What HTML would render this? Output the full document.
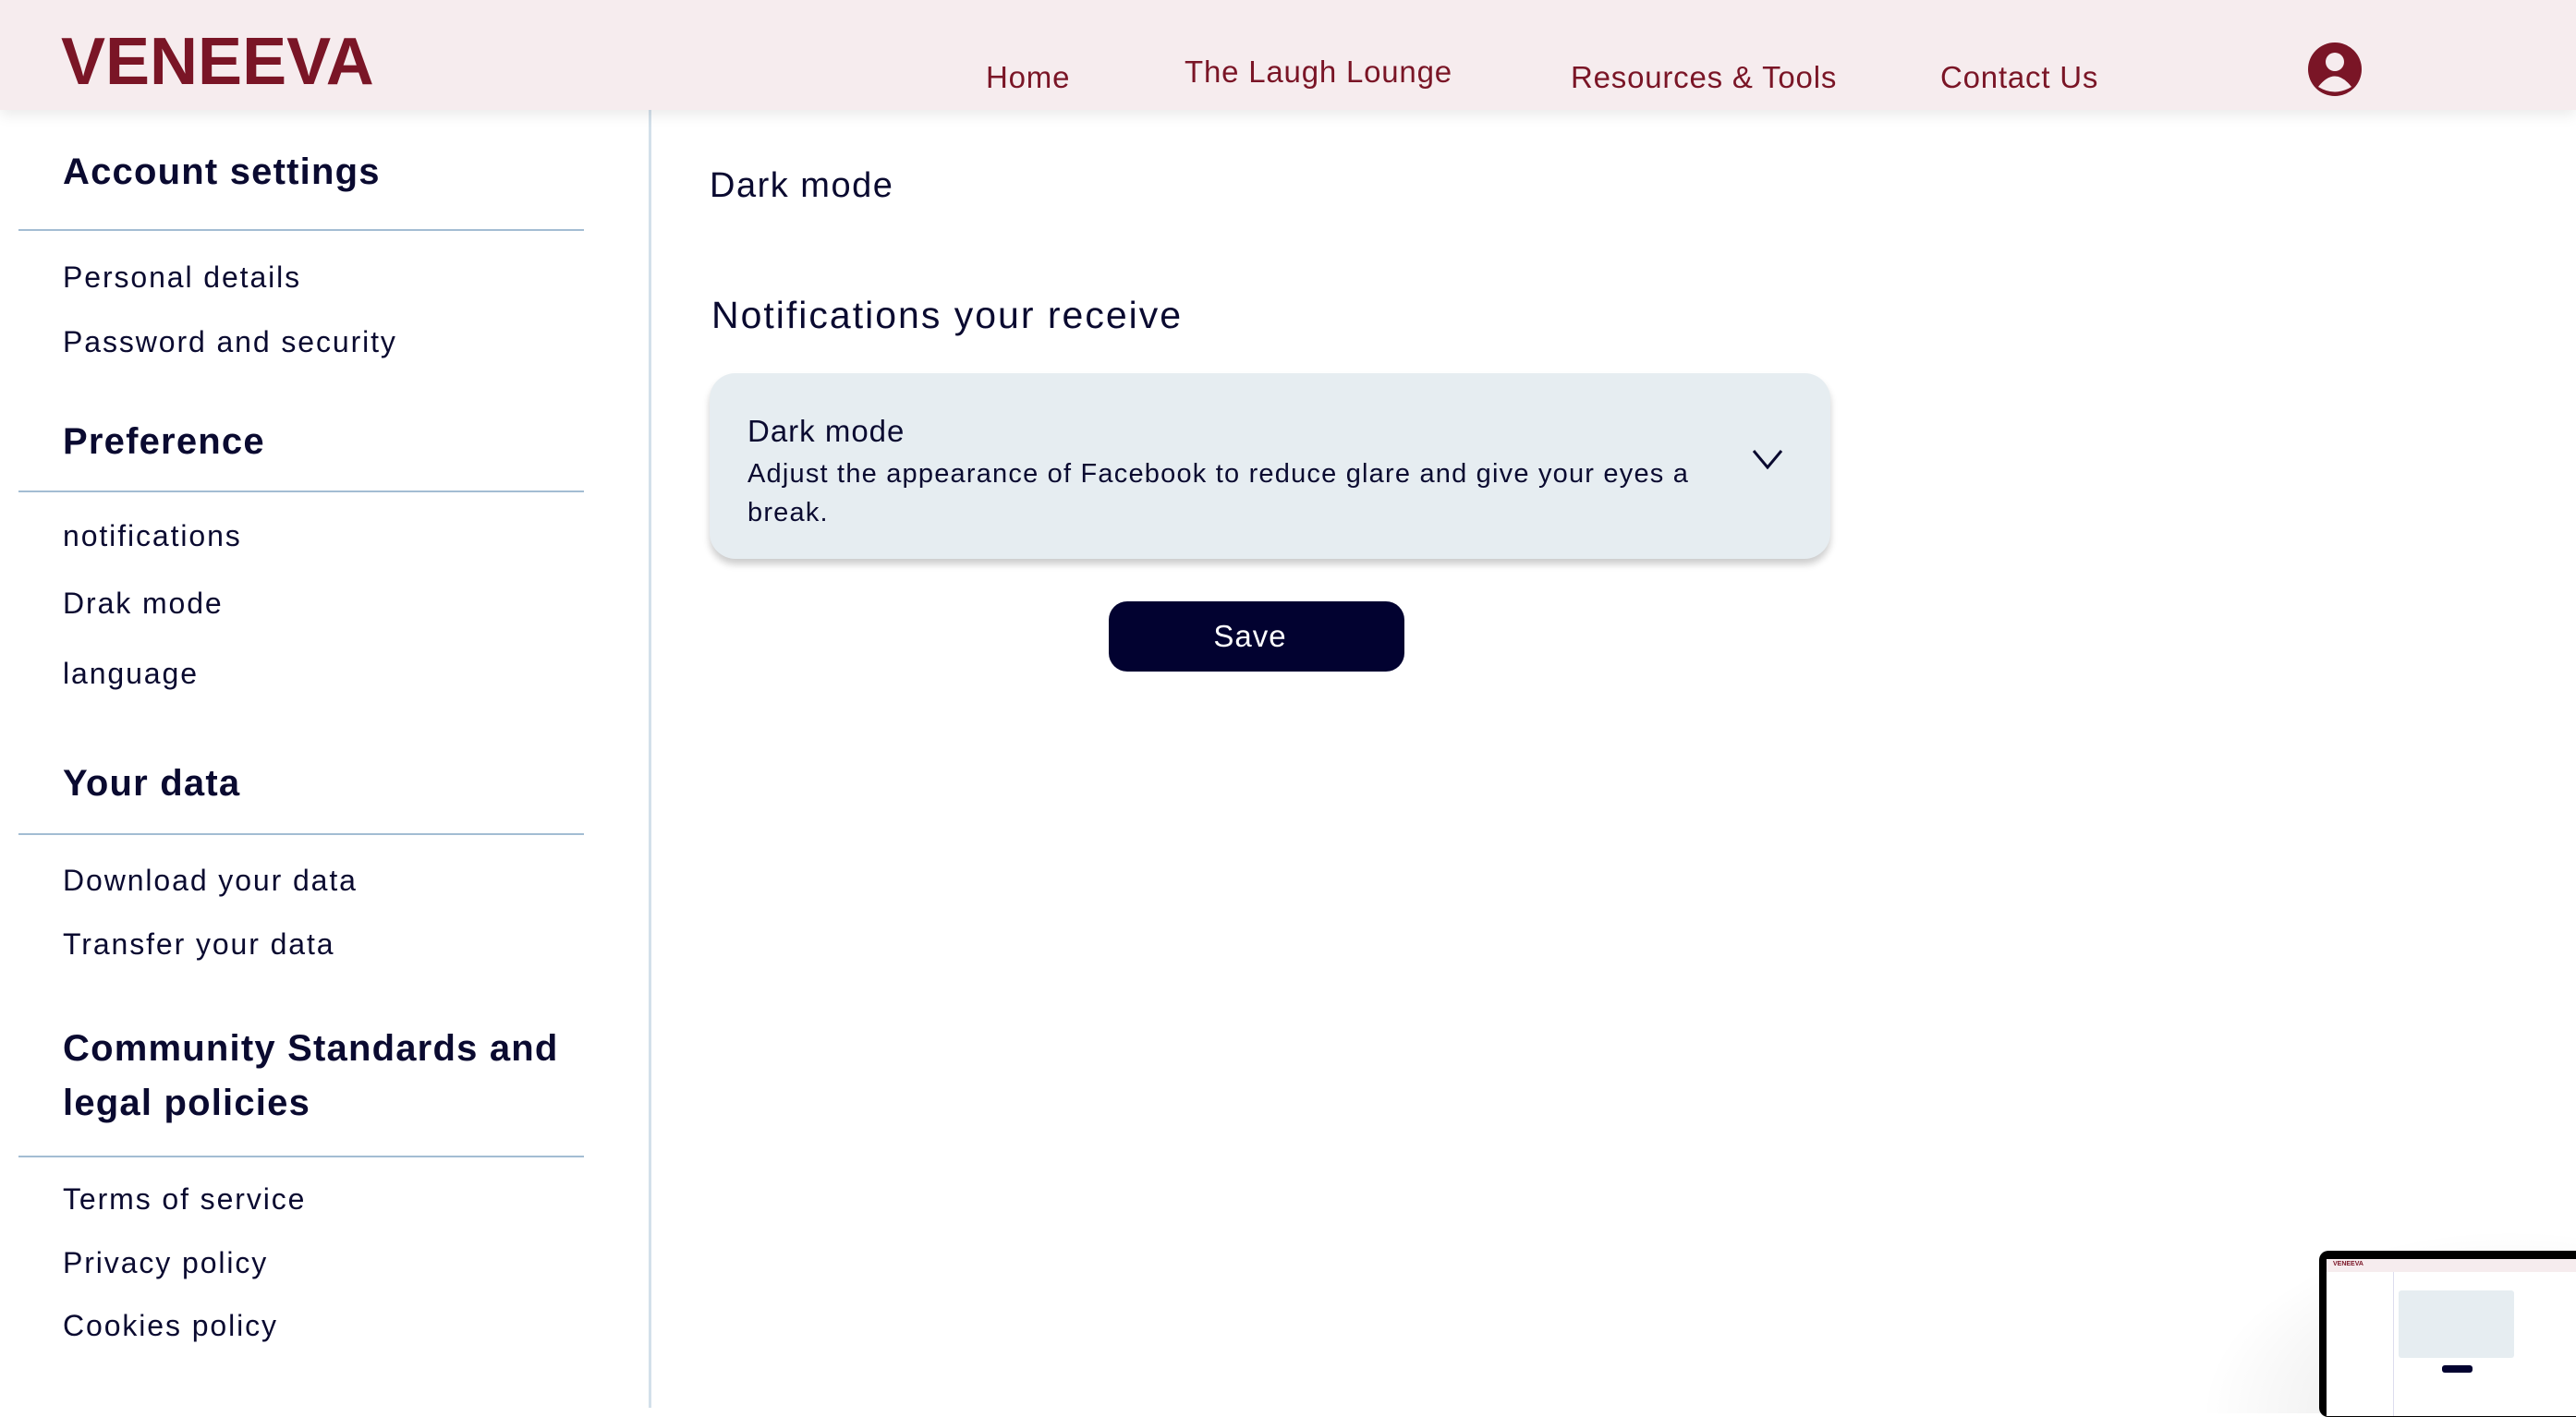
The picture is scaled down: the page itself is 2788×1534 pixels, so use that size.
<!DOCTYPE html>
<html><head><meta charset="utf-8"><style>
*{margin:0;padding:0;box-sizing:border-box}
body{width:2788px;height:1524px;background:#fff;font-family:"Liberation Sans",sans-serif;color:#0a0a30;position:relative;overflow:hidden}
.hdr{position:absolute;left:0;top:0;width:2788px;height:119px;background:#f6ecee;box-shadow:0 6px 14px rgba(0,0,0,.08);z-index:2}
.logo{position:absolute;left:66px;top:26px;font-size:72px;font-weight:bold;color:#7a1526;letter-spacing:0px}
.nav{position:absolute;font-size:33px;color:#7a1526;letter-spacing:0.8px}
.side{position:absolute;left:702px;top:119px;width:3px;height:1405px;background:#d3e0ea}
.a{position:absolute;white-space:nowrap}
.h{font-size:40px;font-weight:bold;left:68px;letter-spacing:1.2px}
.i{font-size:32px;left:68px;letter-spacing:1.9px}
.ln{position:absolute;left:20px;width:612px;height:2px;background:#a3bdd3}
</style></head><body>
<div class="hdr">
<div class="logo">VENEEVA</div>
<div class="nav" style="left:1067px;top:65px">Home</div>
<div class="nav" style="left:1282px;top:59px">The Laugh Lounge</div>
<div class="nav" style="left:1700px;top:65px">Resources &amp; Tools</div>
<div class="nav" style="left:2100px;top:65px">Contact Us</div>
<svg style="position:absolute;left:2497px;top:45px" width="60" height="60" viewBox="0 0 60 60"><circle cx="30" cy="30" r="29" fill="#7a1526"/><circle cx="30" cy="22" r="10" fill="#f6ecee"/><path d="M12 49 Q30 26 48 49 Q30 60 12 49Z" fill="#f6ecee"/></svg>
</div>
<div class="side"></div>

<div class="a h" style="top:164px">Account settings</div>
<div class="ln" style="top:248px"></div>
<div class="a i" style="top:282px">Personal details</div>
<div class="a i" style="top:352px">Password and security</div>
<div class="a h" style="top:456px">Preference</div>
<div class="ln" style="top:531px"></div>
<div class="a i" style="top:562px">notifications</div>
<div class="a i" style="top:635px">Drak mode</div>
<div class="a i" style="top:711px">language</div>
<div class="a h" style="top:826px">Your data</div>
<div class="ln" style="top:902px"></div>
<div class="a i" style="top:935px">Download your data</div>
<div class="a i" style="top:1004px">Transfer your data</div>
<div class="a h" style="top:1106px;line-height:59px">Community Standards and<br>legal policies</div>
<div class="ln" style="top:1251px"></div>
<div class="a i" style="top:1280px">Terms of service</div>
<div class="a i" style="top:1349px">Privacy policy</div>
<div class="a i" style="top:1417px">Cookies policy</div>

<div class="a" style="left:768px;top:180px;font-size:38px;letter-spacing:1.5px">Dark mode</div>
<div class="a" style="left:770px;top:318px;font-size:41px;letter-spacing:2px">Notifications your receive</div>
<div style="position:absolute;left:768px;top:404px;width:1213px;height:201px;background:#e6edf1;border-radius:28px;box-shadow:0 6px 8px rgba(0,0,0,.2)">
<div class="a" style="left:41px;top:44px;font-size:33px;letter-spacing:1px">Dark mode</div>
<div class="a" style="left:41px;top:88px;font-size:29px;line-height:42px;letter-spacing:1.2px">Adjust the appearance of Facebook to reduce glare and give your eyes a<br>break.</div>
<svg style="position:absolute;left:1128px;top:82px" width="34" height="22" viewBox="0 0 34 22"><path d="M2 2 L17 20 L32 2" stroke="#0a0a30" stroke-width="3" fill="none"/></svg>
</div>
<div style="position:absolute;left:1200px;top:651px;width:320px;height:76px;background:#020230;border-radius:20px;color:#fff;font-size:33px;text-align:center;line-height:76px;padding-right:14px;letter-spacing:1px">Save</div>

<div style="position:absolute;left:2380px;top:1330px;width:420px;height:200px;background:radial-gradient(ellipse at 80% 100%,rgba(0,0,0,.12),rgba(0,0,0,0) 70%)"></div>
<div style="position:absolute;left:2510px;top:1354px;width:290px;height:180px;background:#000;border-radius:10px">
<div style="position:absolute;left:8px;top:9px;width:290px;height:170px;background:#fff">
<div style="height:14px;background:#f6ecee;font-size:7px;font-weight:bold;color:#7a1526;padding:2px 7px">VENEEVA</div>
<div style="position:absolute;left:72px;top:14px;width:1px;height:156px;background:#dde"></div>
<div style="position:absolute;left:78px;top:34px;width:125px;height:73px;background:#e6edf1;border-radius:3px"></div>
<div style="position:absolute;left:125px;top:115px;width:33px;height:8px;background:#020230;border-radius:3px"></div>
</div></div>
</body></html>
